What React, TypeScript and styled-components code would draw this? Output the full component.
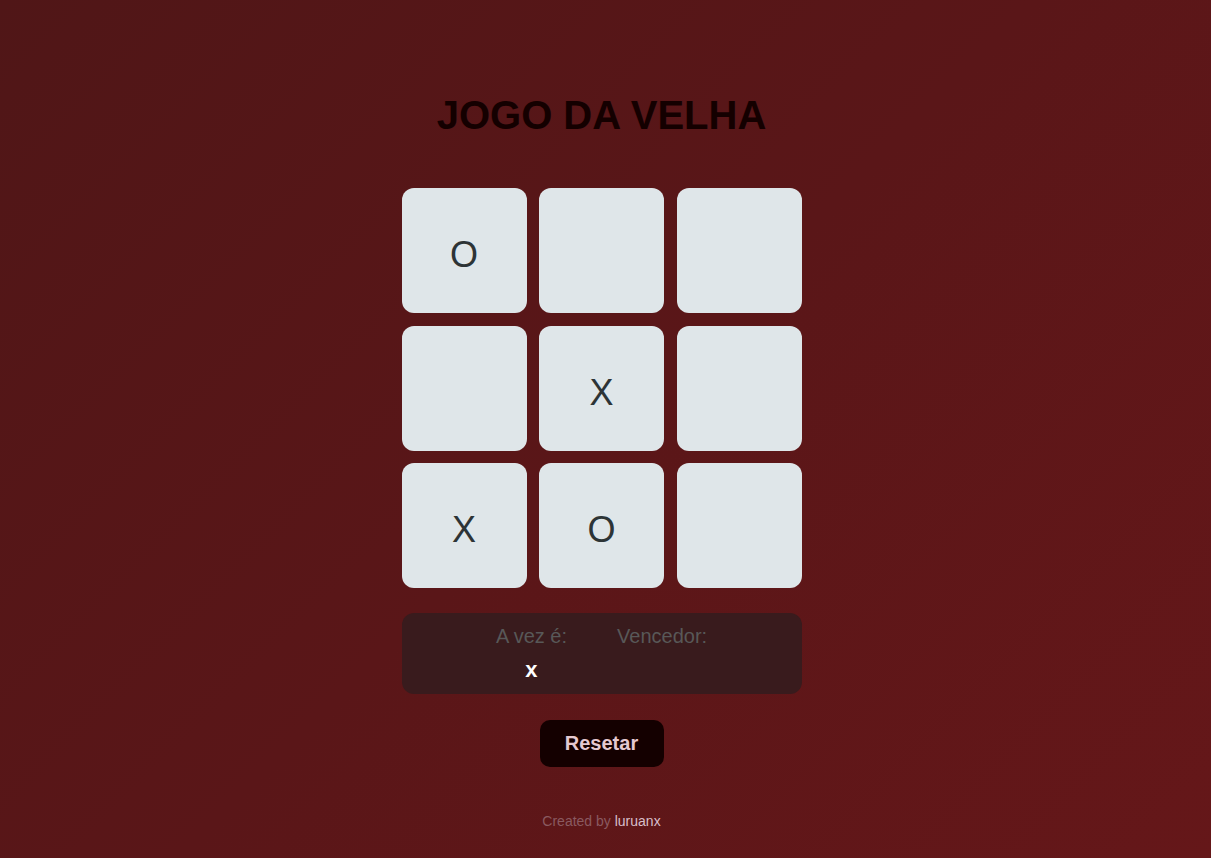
import React from "react";
import styled, { createGlobalStyle } from "styled-components";

const GlobalStyle = createGlobalStyle`
  html, body {
    margin: 0;
    padding: 0;
  }
  body {
    font-family: "Liberation Sans", Arial, sans-serif;
    background: linear-gradient(135deg, #501617 0%, #5a1618 50%, #651719 100%);
    min-height: 858px;
  }
`;

const Page = styled.main`
  min-height: 858px;
  display: flex;
  flex-direction: column;
  align-items: center;
  padding: 92px 8px 0 0;
  box-sizing: border-box;
`;

const Title = styled.h1`
  margin: 0;
  font-size: 40px;
  font-weight: 700;
  color: #140000;
  line-height: 46px;
`;

const Board = styled.div`
  margin-top: 50px;
  display: grid;
  grid-template-columns: repeat(3, 125px);
  grid-auto-rows: 125px;
  column-gap: 12.5px;
  row-gap: 12.5px;
`;

const Cell = styled.button`
  border: none;
  border-radius: 12px;
  background: #dfe6e9;
  color: #2d3436;
  font-family: "Liberation Sans", Arial, sans-serif;
  font-size: 36px;
  display: flex;
  align-items: center;
  justify-content: center;
  padding: 9px 0 0 0;
  cursor: pointer;
`;

const Status = styled.section`
  margin-top: 25px;
  width: 400px;
  height: 81px;
  box-sizing: border-box;
  border-radius: 12px;
  background: #391b1d;
  display: flex;
  justify-content: center;
  gap: 50px;
  padding-top: 12px;
`;

const StatusCol = styled.div`
  display: flex;
  flex-direction: column;
  align-items: center;
`;

const StatusLabel = styled.span`
  font-size: 20px;
  color: #585858;
  line-height: 23px;
`;

const StatusValue = styled.span`
  font-size: 22px;
  font-weight: 700;
  color: #ffffff;
  line-height: 25px;
  margin-top: 9px;
`;

const ResetButton = styled.button`
  margin-top: 26px;
  width: 124px;
  height: 47px;
  border: none;
  border-radius: 10px;
  background: #140000;
  color: #e4c8d0;
  font-family: "Liberation Sans", Arial, sans-serif;
  font-size: 20px;
  font-weight: 700;
  cursor: pointer;
`;

const Footer = styled.footer`
  margin-top: 46px;
  font-size: 14px;
  color: #8a5a60;
`;

const Author = styled.span`
  color: #d8bfca;
`;

const cells = ["O", "", "", "", "X", "", "X", "O", ""];

export default function App() {
  return (
    <>
      <GlobalStyle />
      <Page>
        <Title>JOGO DA VELHA</Title>
        <Board>
          {cells.map((c, i) => (
            <Cell key={i}>{c}</Cell>
          ))}
        </Board>
        <Status>
          <StatusCol>
            <StatusLabel>A vez é:</StatusLabel>
            <StatusValue>x</StatusValue>
          </StatusCol>
          <StatusCol>
            <StatusLabel>Vencedor:</StatusLabel>
            <StatusValue></StatusValue>
          </StatusCol>
        </Status>
        <ResetButton>Resetar</ResetButton>
        <Footer>
          Created by <Author>luruanx</Author>
        </Footer>
      </Page>
    </>
  );
}
